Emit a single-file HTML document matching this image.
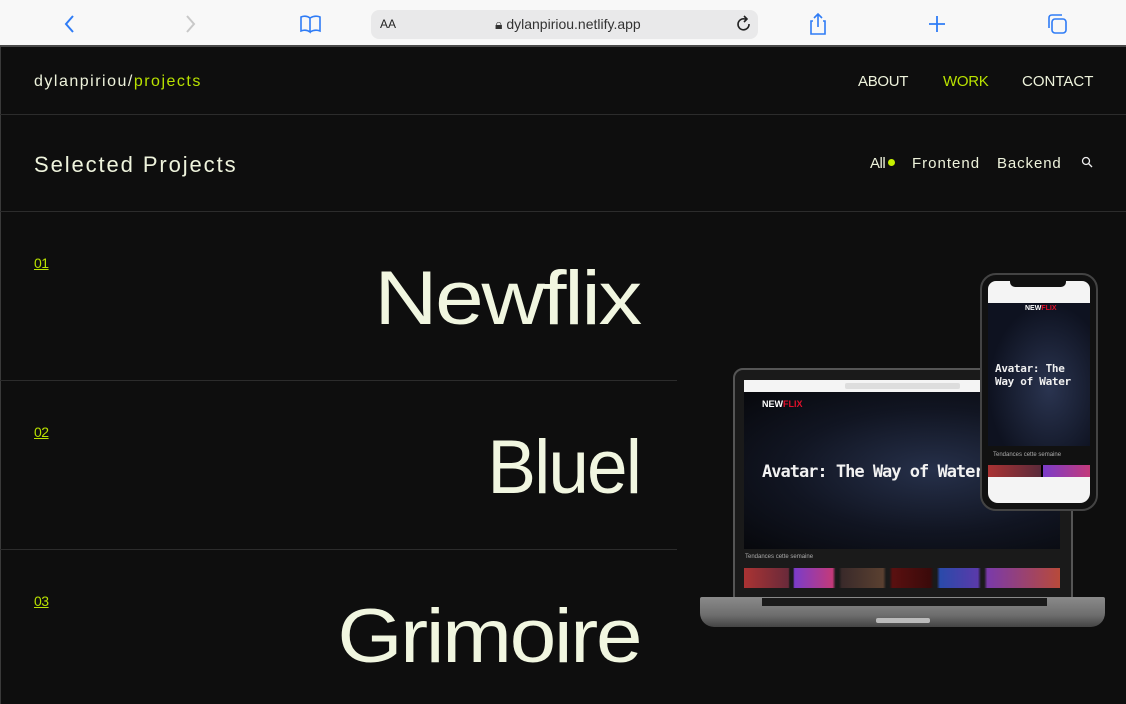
<!DOCTYPE html>
<html><head><meta charset="utf-8"><style>
*{margin:0;padding:0;box-sizing:border-box}
body{width:1126px;height:704px;overflow:hidden;background:#0e0e0e;font-family:"Liberation Sans",sans-serif;position:relative;color:#eef3dc}
.bar{position:absolute;left:0;top:0;width:1126px;height:47px;background:#f8f8f8;border-bottom:2px solid #4a4a4a}
.url{position:absolute;left:371px;top:10px;width:387px;height:29px;background:#e9e9ea;border-radius:8px;font-size:13px;color:#222}
.abs{position:absolute}
.line{position:absolute;height:1px;background:#2c2c2c}
.num{position:absolute;left:34px;color:#b9e200;font-size:14px;text-decoration:underline;letter-spacing:-0.5px}
.big{position:absolute;right:486px;font-size:76px;line-height:1;letter-spacing:-2px;transform-origin:right center;color:#f1f6e0}
.nav{position:absolute;top:73px;font-size:15px;letter-spacing:-0.3px}
.f{position:absolute;top:155px;font-size:15px;letter-spacing:0.3px}
</style></head><body>
<div class="bar">
<svg class="abs" style="left:62px;top:14px" width="16" height="20"><path d="M11 2 L4 10 L11 18" stroke="#2f7cf6" stroke-width="2" fill="none"/></svg>
<svg class="abs" style="left:182px;top:14px" width="16" height="20"><path d="M5 2 L12 10 L5 18" stroke="#c8c8c8" stroke-width="2" fill="none"/></svg>
<svg class="abs" style="left:299px;top:14px" width="24" height="20"><path d="M2 3 Q7 1 11 4 L11 18 Q7 15 2 17 Z M11 4 Q16 1 21 3 L21 17 Q16 15 11 18" stroke="#2f7cf6" stroke-width="1.6" fill="none"/></svg>
<div class="url"><span class="abs" style="left:9px;top:7px;font-size:12px">AA</span>
<span class="abs" style="left:124px;top:6px;font-size:14px;color:#333">&#128274;&#xFE0E; dylanpiriou.netlify.app</span>
<svg class="abs" style="left:364px;top:5px" width="18" height="18"><path d="M14 9 A5.5 5.5 0 1 1 10 4 L12 4 M9 1 L12 4 L9 7" stroke="#222" stroke-width="1.6" fill="none"/></svg></div>
<svg class="abs" style="left:808px;top:12px" width="20" height="24"><path d="M5 9 L3 9 L3 22 L17 22 L17 9 L15 9 M10 15 L10 2 M6 6 L10 2 L14 6" stroke="#2f7cf6" stroke-width="1.6" fill="none"/></svg>
<svg class="abs" style="left:928px;top:15px" width="18" height="18"><path d="M9 1 V17 M1 9 H17" stroke="#2f7cf6" stroke-width="1.8"/></svg>
<svg class="abs" style="left:1047px;top:13px" width="22" height="22"><rect x="5" y="6" width="14" height="14" rx="3" stroke="#2f7cf6" stroke-width="1.6" fill="none"/><path d="M2 15 V5 Q2 2 5 2 H15" stroke="#2f7cf6" stroke-width="1.6" fill="none"/></svg>
</div>
<div class="abs" style="left:0;top:47px;width:1px;height:657px;background:#3a3a3a"></div>
<div class="abs" style="left:34px;top:73px;font-size:16px;letter-spacing:1.5px">dylanpiriou/<span style="color:#b9e200">projects</span></div>
<div class="nav" style="left:858px">ABOUT</div>
<div class="nav" style="left:943px;color:#b9e200">WORK</div>
<div class="nav" style="left:1022px;letter-spacing:0">CONTACT</div>
<div class="line" style="left:0;top:114px;width:1126px"></div>
<div class="abs" style="left:34px;top:152px;font-size:22px;letter-spacing:1.9px">Selected Projects</div>
<div class="abs" style="left:870px;top:155px;font-size:15px;letter-spacing:-0.5px">All</div>
<div class="abs" style="left:888px;top:159px;width:7px;height:7px;border-radius:50%;background:#c6f000"></div>
<div class="f" style="left:912px;letter-spacing:1px">Frontend</div>
<div class="f" style="left:997px;letter-spacing:0.9px">Backend</div>
<svg class="abs" style="left:1081px;top:156px" width="12" height="12"><circle cx="5" cy="5" r="3.5" stroke="#eee" stroke-width="1.3" fill="none"/><path d="M7.5 7.5 L11 11" stroke="#eee" stroke-width="1.3"/></svg>
<div class="line" style="left:0;top:211px;width:1126px"></div>
<div class="num" style="top:255px">01</div>
<div class="big" style="top:261px;transform:scaleX(1.15)">Newflix</div>
<div class="line" style="left:0;top:380px;width:677px"></div>
<div class="num" style="top:424px">02</div>
<div class="big" style="top:430px;transform:scaleX(0.96)">Bluel</div>
<div class="line" style="left:0;top:549px;width:677px"></div>
<div class="num" style="top:593px">03</div>
<div class="big" style="top:599px;transform:scaleX(1.1)">Grimoire</div>

<!-- laptop -->
<div class="abs" style="left:733px;top:368px;width:340px;height:232px;background:#1a1a1a;border:2px solid #555;border-radius:10px 10px 0 0"></div>
<div class="abs" style="left:744px;top:380px;width:316px;height:12px;background:#f4f4f4"></div>
<div class="abs" style="left:845px;top:383px;width:115px;height:6px;background:#ddd;border-radius:2px"></div>
<div class="abs" style="left:744px;top:392px;width:316px;height:157px;background:radial-gradient(ellipse at 60% 50%,#26304a 0%,#111522 55%,#07080c 100%)"></div>
<div class="abs" style="left:762px;top:399px;font-size:9px;font-weight:bold;color:#fff">NEW<span style="color:#e0102a">FLIX</span></div>
<div class="abs" style="left:762px;top:462px;font-size:17px;font-weight:bold;color:#f2f2f2;font-family:'DejaVu Sans Mono',monospace;letter-spacing:-1px">Avatar: The Way of Water</div>
<div class="abs" style="left:745px;top:554px;font-size:6px;color:#aaa">Tendances cette semaine</div>
<div class="abs" style="left:744px;top:568px;width:316px;height:20px;background:linear-gradient(90deg,#a33 0,#6a2a3a 14%,#0000 14.5%,#0000 15.5%,#7b3cc9 16%,#c33a7a 28%,#0000 29%,#0000 30%,#3a2a2a 31%,#5a4030 44%,#0000 45%,#0000 46%,#5a1010 47%,#3a0a0a 59%,#0000 60%,#0000 61%,#2a4aaa 62%,#5a3aaa 74%,#0000 75%,#0000 76%,#7a3aaa 77%,#b84a3a 100%)"></div>
<div class="abs" style="left:700px;top:597px;width:405px;height:30px;background:linear-gradient(#8a8a8a,#6e6e6e 60%,#444);border-radius:2px 2px 14px 14px"></div>
<div class="abs" style="left:762px;top:598px;width:285px;height:8px;background:#1a1a1a"></div>
<div class="abs" style="left:876px;top:618px;width:54px;height:5px;background:#bbb;border-radius:2px"></div>
<!-- phone -->
<div class="abs" style="left:980px;top:273px;width:118px;height:238px;background:#111;border:2px solid #444;border-radius:16px"></div>
<div class="abs" style="left:988px;top:281px;width:102px;height:22px;background:#f4f4f4;border-radius:8px 8px 0 0"></div>
<div class="abs" style="left:1010px;top:281px;width:56px;height:6px;background:#111;border-radius:0 0 5px 5px"></div>
<div class="abs" style="left:988px;top:303px;width:102px;height:143px;background:radial-gradient(ellipse at 60% 60%,#2a3450,#0e1220 70%)"></div>
<div class="abs" style="left:1025px;top:305px;font-size:7px;font-weight:bold;color:#fff">NEW<span style="color:#e0102a">FLIX</span></div>
<div class="abs" style="left:995px;top:362px;font-size:11px;font-weight:bold;color:#f0f0f0;font-family:'DejaVu Sans Mono',monospace;line-height:13px;letter-spacing:-0.3px">Avatar: The<br>Way of Water</div>
<div class="abs" style="left:993px;top:452px;font-size:6px;color:#aaa">Tendances cette semaine</div>
<div class="abs" style="left:988px;top:465px;width:102px;height:12px;background:linear-gradient(90deg,#a33,#5a2a3a 52%,#000 52%,#000 54%,#7b3cc9 54%,#c33a7a)"></div>
<div class="abs" style="left:988px;top:477px;width:102px;height:26px;background:#f4f4f4;border-radius:0 0 10px 10px"></div>
</body></html>
